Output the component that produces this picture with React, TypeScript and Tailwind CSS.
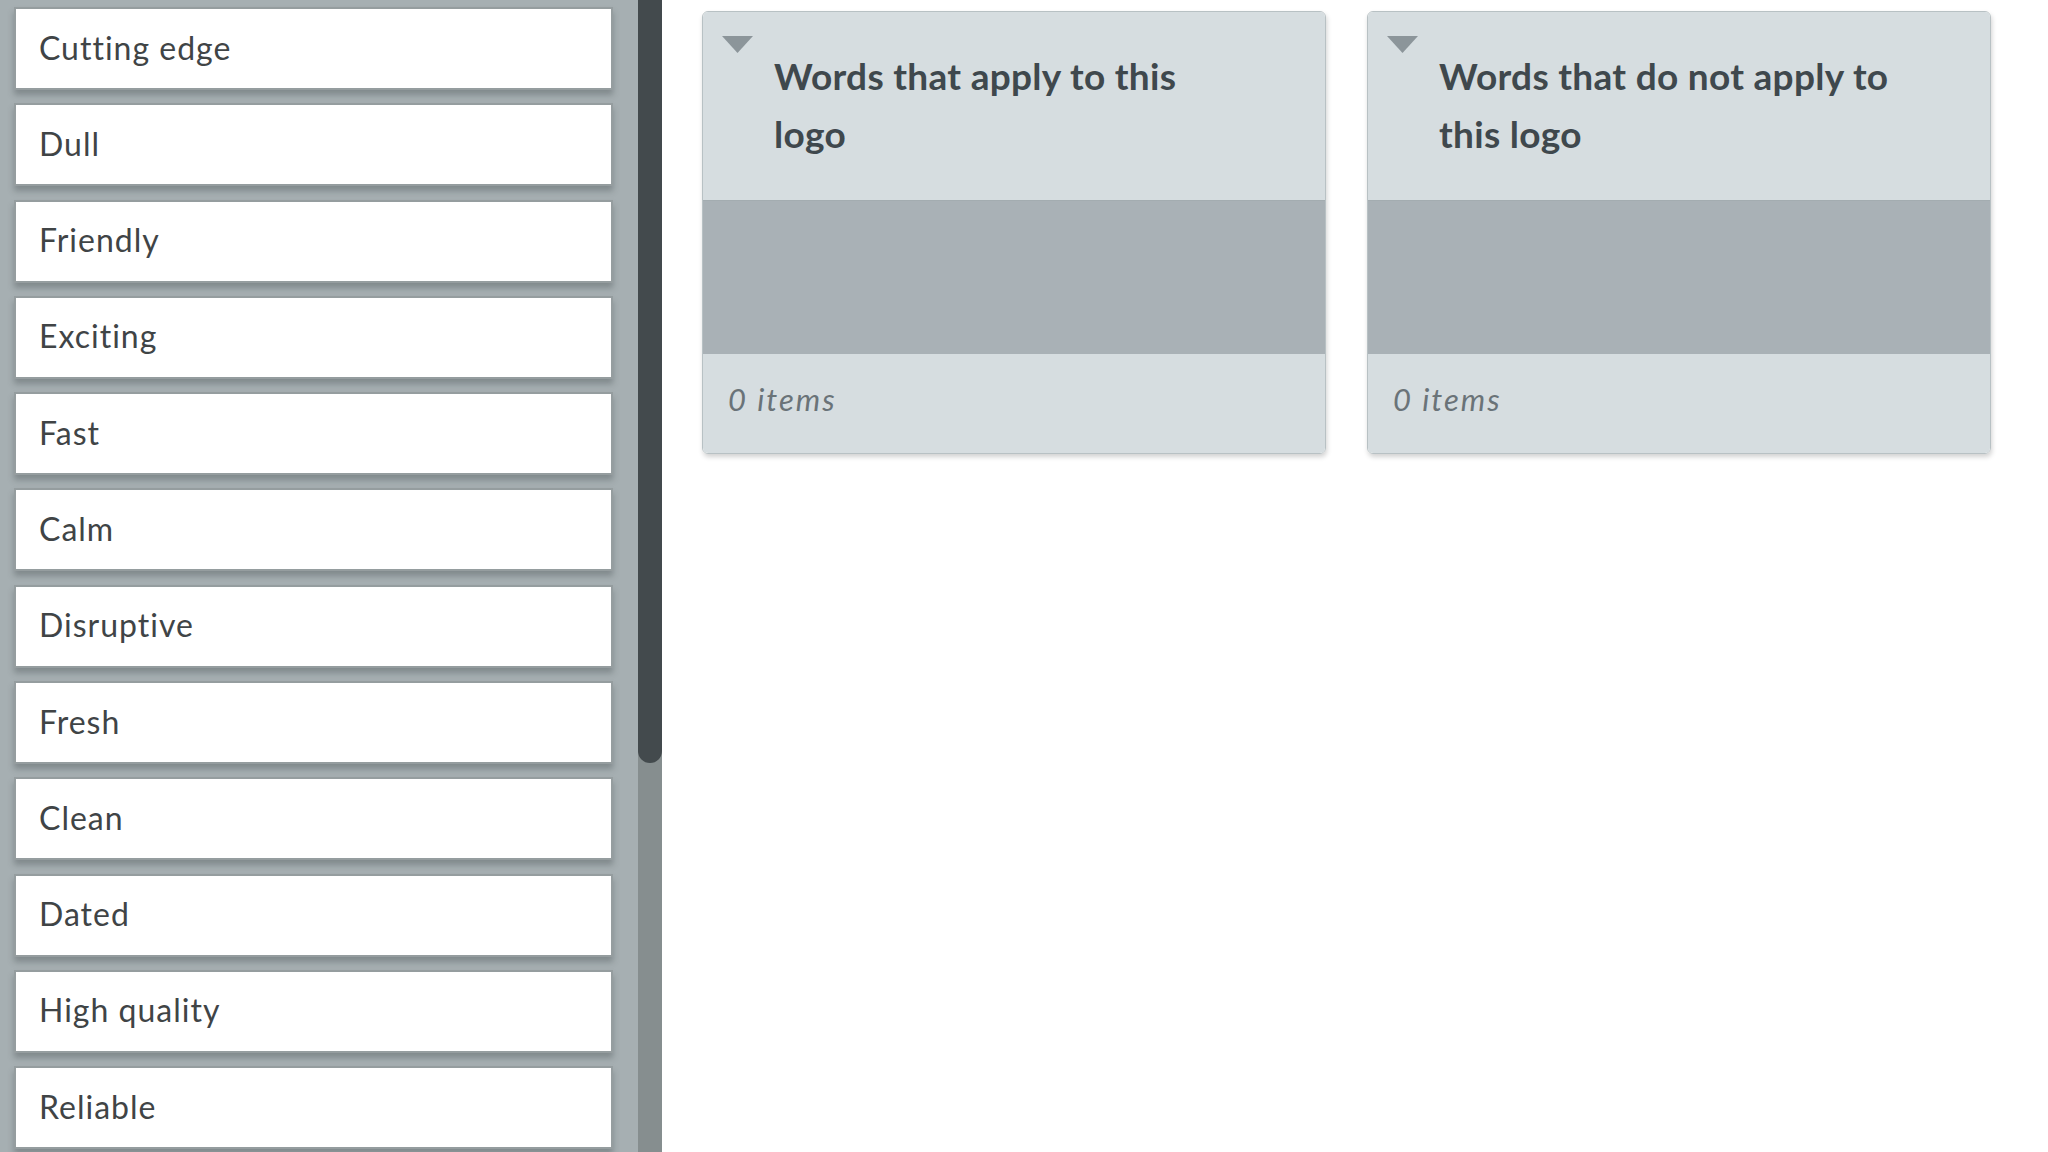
import React from 'react'

// ─── Data ────────────────────────────────────────────────────

const WORDS = [
  'Cutting edge',
  'Dull',
  'Friendly',
  'Exciting',
  'Fast',
  'Calm',
  'Disruptive',
  'Fresh',
  'Clean',
  'Dated',
  'High quality',
  'Reliable',
]

const GROUPS = [
  { id: 'apply', title: 'Words that apply to this logo', count: 0 },
  { id: 'not-apply', title: 'Words that do not apply to this logo', count: 0 },
]

const FONT = "font-['Lato','Open_Sans',sans-serif]"

// ─── Pieces ──────────────────────────────────────────────────

function WordCard({ label }: { label: string }) {
  return (
    <div className="flex h-[83px] w-[599px] shrink-0 items-center border-2 border-[#959d9f] bg-white pb-[2px] pl-[23px] shadow-[0_5px_6px_rgba(60,70,72,0.35)]">
      <span className="text-[32px] tracking-[1px] text-[#404446]">{label}</span>
    </div>
  )
}

function GroupCard({ title, count }: { title: string; count: number }) {
  return (
    <div className="flex w-[624px] flex-col overflow-hidden rounded-[6px] border border-[#b8c1c4] shadow-[1px_3px_5px_rgba(0,0,0,0.18)]">
      {/* Header */}
      <div className="flex h-[188px] items-start bg-[#d6dde0] pl-[19px] pt-[23px]">
        <svg width="31" height="18" viewBox="0 0 31 18" className="mt-[1px] shrink-0">
          <path d="M0 0 H31 L15.5 17 Z" fill="#8c959a" />
        </svg>
        <h2 className="ml-[21px] mt-[12px] w-[455px] text-[37px] font-bold leading-[58px] tracking-[0.3px] text-[#3f484d]">
          {title}
        </h2>
      </div>
      {/* Drop zone */}
      <div className="h-[154px] border-t border-[#a3acb0] bg-[#a9b1b6]" />
      {/* Footer */}
      <div className="flex h-[99px] items-center bg-[#d6dde0] pl-[25px] pb-[8px]">
        <span className="text-[31px] italic tracking-[2px] text-[#6a7378]">
          {count} items
        </span>
      </div>
    </div>
  )
}

// ─── App ─────────────────────────────────────────────────────

export default function App() {
  return (
    <div className={`flex h-[1152px] w-[2048px] overflow-hidden bg-white ${FONT}`}>
      {/* Word list */}
      <div className="flex w-[638px] shrink-0 flex-col gap-[13.3px] bg-[#a6afb2] pl-[14px] pt-[7px]">
        {WORDS.map((w) => (
          <WordCard key={w} label={w} />
        ))}
      </div>

      {/* Scrollbar */}
      <div className="flex w-[24px] shrink-0 flex-col bg-[#868e8f]">
        <div className="h-[763px] rounded-b-[12px] bg-[#434a4d]" />
      </div>

      {/* Groups */}
      <div className="flex items-start gap-[41px] pl-[40px] pt-[11px]">
        {GROUPS.map((g) => (
          <GroupCard key={g.id} title={g.title} count={g.count} />
        ))}
      </div>
    </div>
  )
}
